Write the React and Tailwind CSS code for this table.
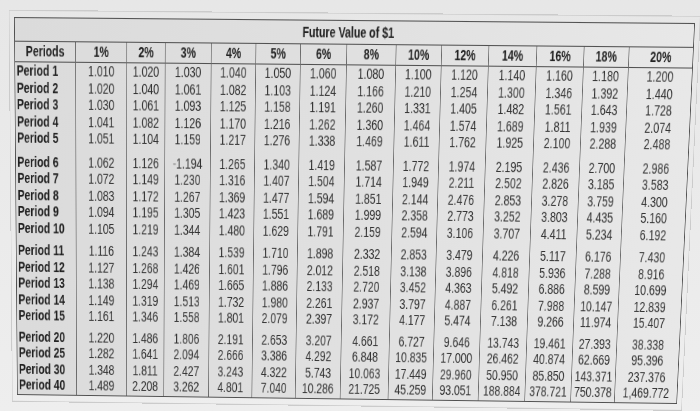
import React, { useLayoutEffect, useRef, useState } from "react";

function quadMatrix(W, H, q) {
  const [[x0, y0], [x1, y1], [x2, y2], [x3, y3]] = q;
  const dx1 = x1 - x2, dx2 = x3 - x2, dx3 = x0 - x1 + x2 - x3;
  const dy1 = y1 - y2, dy2 = y3 - y2, dy3 = y0 - y1 + y2 - y3;
  const den = dx1 * dy2 - dx2 * dy1;
  const g = (dx3 * dy2 - dx2 * dy3) / den;
  const h = (dx1 * dy3 - dx3 * dy1) / den;
  const a = x1 - x0 + g * x1;
  const b = x3 - x0 + h * x3;
  const c = x0;
  const d = y1 - y0 + g * y1;
  const e = y3 - y0 + h * y3;
  const f = y0;
  const m = [a / W, d / W, 0, g / W, b / H, e / H, 0, h / H, 0, 0, 1, 0, c, f, 0, 1];
  return `matrix3d(${m.join(",")})`;
}

const groups = [
  ["Period 1", "Period 2", "Period 3", "Period 4", "Period 5"],
  ["Period 6", "Period 7", "Period 8", "Period 9", "Period 10"],
  ["Period 11", "Period 12", "Period 13", "Period 14", "Period 15"],
  ["Period 20", "Period 25", "Period 30", "Period 40"],
];

const cols = [
  { label: "1%", w: "w-[68px]", v: "1.010 1.020 1.030 1.041 1.051 1.062 1.072 1.083 1.094 1.105 1.116 1.127 1.138 1.149 1.161 1.220 1.282 1.348 1.489" },
  { label: "2%", w: "w-[51px]", v: "1.020 1.040 1.061 1.082 1.104 1.126 1.149 1.172 1.195 1.219 1.243 1.268 1.294 1.319 1.346 1.486 1.641 1.811 2.208" },
  { label: "3%", w: "w-[61px]", v: "1.030 1.061 1.093 1.126 1.159 1.194 1.230 1.267 1.305 1.344 1.384 1.426 1.469 1.513 1.558 1.806 2.094 2.427 3.262" },
  { label: "4%", w: "w-[59px]", v: "1.040 1.082 1.125 1.170 1.217 1.265 1.316 1.369 1.423 1.480 1.539 1.601 1.665 1.732 1.801 2.191 2.666 3.243 4.801" },
  { label: "5%", w: "w-[59px]", v: "1.050 1.103 1.158 1.216 1.276 1.340 1.407 1.477 1.551 1.629 1.710 1.796 1.886 1.980 2.079 2.653 3.386 4.322 7.040" },
  { label: "6%", w: "w-[61px]", v: "1.060 1.124 1.191 1.262 1.338 1.419 1.504 1.594 1.689 1.791 1.898 2.012 2.133 2.261 2.397 3.207 4.292 5.743 10.286" },
  { label: "8%", w: "w-[65px]", v: "1.080 1.166 1.260 1.360 1.469 1.587 1.714 1.851 1.999 2.159 2.332 2.518 2.720 2.937 3.172 4.661 6.848 10.063 21.725" },
  { label: "10%", w: "w-[60px]", v: "1.100 1.210 1.331 1.464 1.611 1.772 1.949 2.144 2.358 2.594 2.853 3.138 3.452 3.797 4.177 6.727 10.835 17.449 45.259" },
  { label: "12%", w: "w-[62px]", v: "1.120 1.254 1.405 1.574 1.762 1.974 2.211 2.476 2.773 3.106 3.479 3.896 4.363 4.887 5.474 9.646 17.000 29.960 93.051" },
  { label: "14%", w: "w-[63px]", v: "1.140 1.300 1.482 1.689 1.925 2.195 2.502 2.853 3.252 3.707 4.226 4.818 5.492 6.261 7.138 13.743 26.462 50.950 188.884" },
  { label: "16%", w: "w-[62px]", v: "1.160 1.346 1.561 1.811 2.100 2.436 2.826 3.278 3.803 4.411 5.117 5.936 6.886 7.988 9.266 19.461 40.874 85.850 378.721" },
  { label: "18%", w: "w-[59px]", v: "1.180 1.392 1.643 1.939 2.288 2.700 3.185 3.759 4.435 5.234 6.176 7.288 8.599 10.147 11.974 27.393 62.669 143.371 750.378" },
  { label: "20%", w: "w-[84px]", v: "1.200 1.440 1.728 2.074 2.488 2.986 3.583 4.300 5.160 6.192 7.430 8.916 10.699 12.839 15.407 38.338 95.396 237.376 1,469.772" },
];

const gapClass = ["", "mt-[7px]", "mt-[6px]", "mt-[5px]"];

function Body({ render }) {
  let idx = 0;
  return (
    <div className="flex flex-col pb-[1px]">
      {groups.map((g, gi) => (
        <div key={gi} className={`flex flex-col ${gapClass[gi]}`}>
          {g.map((p) => {
            const i = idx++;
            return (
              <div key={p} className="h-[16.5px] flex items-center">
                {render(i, p)}
              </div>
            );
          })}
        </div>
      ))}
    </div>
  );
}

export default function App() {
  const ref = useRef(null);
  const [tf, setTf] = useState("none");

  useLayoutEffect(() => {
    const el = ref.current;
    if (!el) return;
    const W = el.offsetWidth;
    const H = el.offsetHeight;
    setTf(
      quadMatrix(W, H, [
        [14, 17],
        [695, 23],
        [677, 404],
        [17, 395],
      ])
    );
  }, []);

  return (
    <div className="w-[700px] h-[411px] overflow-hidden bg-linear-to-b from-[#e7e7e7] to-[#eeeeee] [font-family:'Liberation_Sans',Arial,sans-serif]">
      <div
        ref={ref}
        className="origin-top-left w-[896px] border border-[#505050] bg-linear-to-r from-[#dbdbdb] via-[#e0e0e0] to-[#e8e8e8] outline outline-1 outline-[#cbcbcb] outline-offset-[6px]"
        style={{ transform: tf }}
      >
        <div className="h-[23px] border-b border-[#505050] flex items-center justify-center pr-[12px] text-[14px] font-bold text-[#222]">
          Future Value of $1
        </div>
        <div className="flex">
          <div className="w-[80px] flex flex-col">
            <div className="h-[20px] border-b border-[#505050] flex items-center justify-center text-[14px] font-bold text-[#222]">
              Periods
            </div>
            <Body
              render={(i, p) => (
                <span className="pl-[2px] text-[14px] font-bold text-[#1f1f1f] leading-none">{p}</span>
              )}
            />
          </div>
          {cols.map((c) => {
            const vals = c.v.split(" ");
            return (
              <div key={c.label} className={`${c.w} flex flex-col border-l border-[#6a6a6a]`}>
                <div className="h-[20px] border-b border-[#505050] flex items-center justify-center text-[14px] font-bold text-[#222]">
                  {c.label}
                </div>
                <Body
                  render={(i) => (
                    <span className="w-full text-center text-[14px] text-[#333] leading-none">
                      {c.label === "3%" && i === 5 ? (
                        <span className="text-[#8a8a8a]">-</span>
                      ) : null}
                      {vals[i]}
                    </span>
                  )}
                />
              </div>
            );
          })}
        </div>
      </div>
    </div>
  );
}
